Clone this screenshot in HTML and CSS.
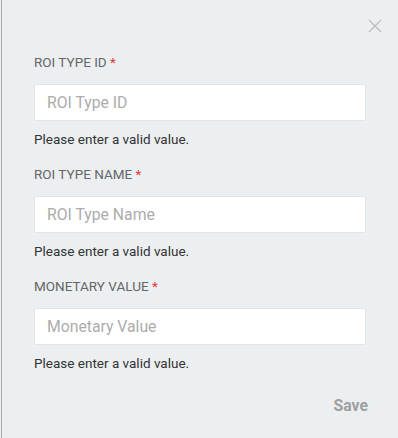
FILE: index.html
```html
<!DOCTYPE html>
<html>
<head>
<meta charset="utf-8">
<link rel="stylesheet" href="styles.css">
</head>
<body>
<div class="dialog">
  <div class="topbar">
    <button class="close" aria-label="Close">
      <svg width="14" height="14" viewBox="0 0 14 14"><path d="M1 1L13 13M13 1L1 13" stroke="#bdbdbd" stroke-width="1.3" fill="none"/></svg>
    </button>
  </div>
  <form class="form">
    <div class="field">
      <label class="label">ROI TYPE ID <span class="req">*</span></label>
      <input class="input" placeholder="ROI Type ID">
      <div class="error">Please enter a valid value.</div>
    </div>
    <div class="field">
      <label class="label">ROI TYPE NAME <span class="req">*</span></label>
      <input class="input" placeholder="ROI Type Name">
      <div class="error">Please enter a valid value.</div>
    </div>
    <div class="field">
      <label class="label">MONETARY VALUE <span class="req">*</span></label>
      <input class="input" placeholder="Monetary Value">
      <div class="error">Please enter a valid value.</div>
    </div>
    <div class="actions">
      <button type="button" class="save">Save</button>
    </div>
  </form>
</div>
</body>
</html>
```
FILE: styles.css
```css
html, body {
  margin: 0;
  padding: 0;
  background: #eceff1;
}
body {
  font-family: Roboto, "Noto Sans", Arial, sans-serif;
  width: 398px;
  height: 438px;
  overflow: hidden;
}
.dialog {
  margin-left: 1px;
  border-left: 1px solid #a8abad;
  height: 438px;
  box-sizing: border-box;
  background: #eceff1;
}
.topbar {
  display: flex;
  justify-content: flex-end;
  padding: 19px 16px 0 0;
  height: 35px;
  box-sizing: border-box;
}
.close {
  border: 0;
  background: none;
  padding: 0;
  width: 14px;
  height: 14px;
  cursor: pointer;
  display: block;
}
.close svg { display: block; }
.form {
  padding: 19px 32px 0 32px;
}
.field {
  display: flex;
  flex-direction: column;
  margin-bottom: 19px;
}
.label {
  font-size: 13.5px;
  line-height: 16px;
  color: #666;
  margin-bottom: 14px;
}
.req {
  color: #e53935;
}
.input {
  height: 37px;
  box-sizing: border-box;
  border: 1px solid #e3e5e7;
  border-radius: 2px;
  background: #fff;
  padding: 0 12px;
  font-family: inherit;
  font-size: 15.75px;
  color: #333;
  outline: none;
}
.input::placeholder {
  color: #acacac;
}
.error {
  font-size: 13.5px;
  line-height: 16px;
  color: #333;
  margin-top: 10px;
}
.actions {
  display: flex;
  justify-content: flex-end;
  padding-top: 7px;
}
.save {
  border: 0;
  background: none;
  padding: 0;
  margin-right: -2px;
  font-family: inherit;
  font-size: 15.75px;
  line-height: 18px;
  font-weight: 700;
  color: #9e9e9e;
  cursor: pointer;
}
```
